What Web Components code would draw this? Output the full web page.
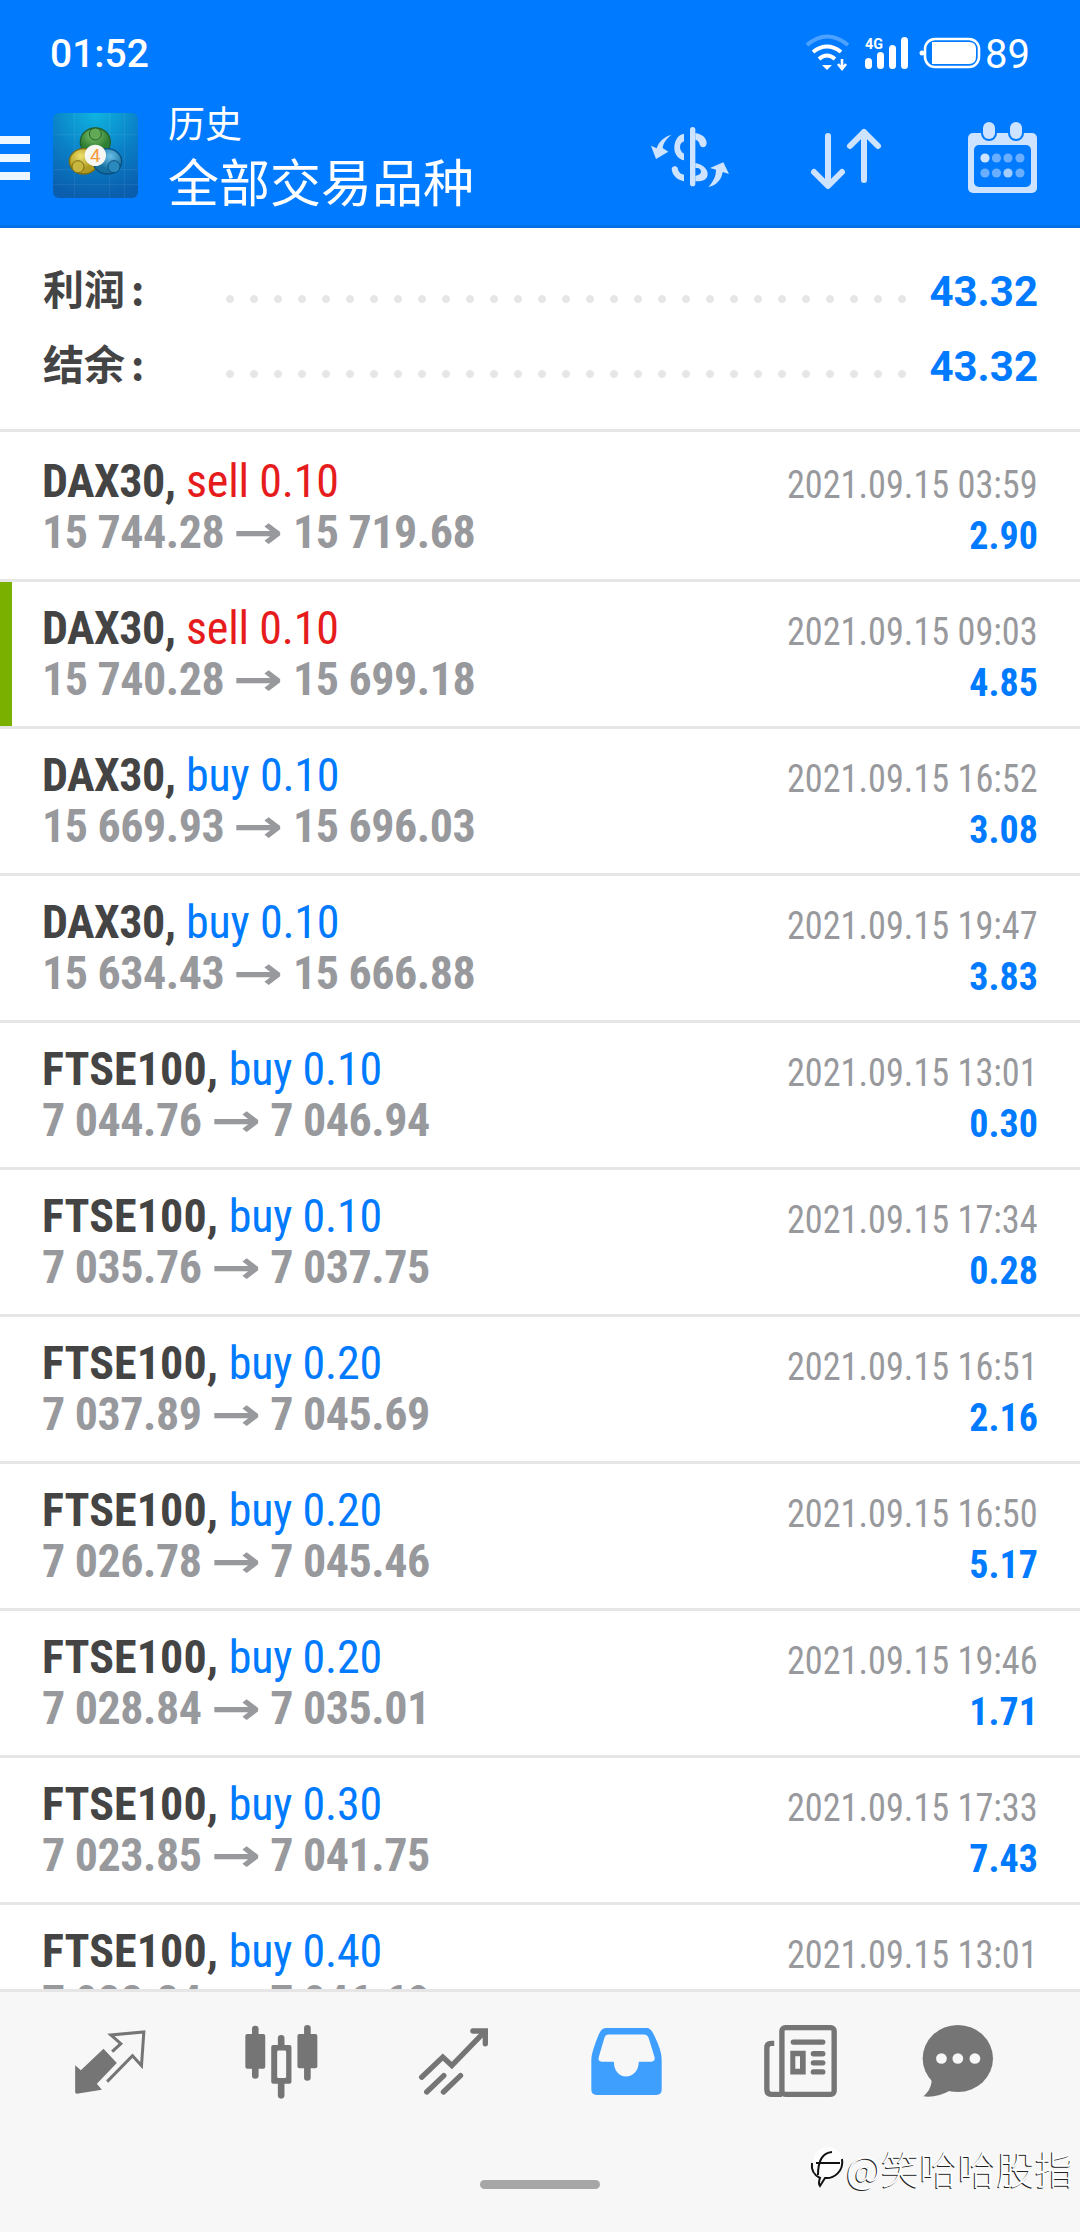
<!DOCTYPE html>
<html>
<head>
<meta charset="utf-8">
<style>
  html, body { margin: 0; padding: 0; }
  body { width: 1080px; height: 2232px; overflow: hidden; font-family: Roboto, "Noto Sans CJK SC", sans-serif; }
</style>
</head>
<body>
<mt-screen>
  <status-bar slot="top"></status-bar>
  <app-toolbar slot="top"></app-toolbar>
  <summary-panel slot="top"></summary-panel>
  <deal-row symbol="DAX30" side="sell" lots="0.10" open="15 744.28" close="15 719.68" time="2021.09.15 03:59" profit="2.90"></deal-row>
  <deal-row symbol="DAX30" side="sell" lots="0.10" open="15 740.28" close="15 699.18" time="2021.09.15 09:03" profit="4.85" marked></deal-row>
  <deal-row symbol="DAX30" side="buy" lots="0.10" open="15 669.93" close="15 696.03" time="2021.09.15 16:52" profit="3.08"></deal-row>
  <deal-row symbol="DAX30" side="buy" lots="0.10" open="15 634.43" close="15 666.88" time="2021.09.15 19:47" profit="3.83"></deal-row>
  <deal-row symbol="FTSE100" side="buy" lots="0.10" open="7 044.76" close="7 046.94" time="2021.09.15 13:01" profit="0.30"></deal-row>
  <deal-row symbol="FTSE100" side="buy" lots="0.10" open="7 035.76" close="7 037.75" time="2021.09.15 17:34" profit="0.28"></deal-row>
  <deal-row symbol="FTSE100" side="buy" lots="0.20" open="7 037.89" close="7 045.69" time="2021.09.15 16:51" profit="2.16"></deal-row>
  <deal-row symbol="FTSE100" side="buy" lots="0.20" open="7 026.78" close="7 045.46" time="2021.09.15 16:50" profit="5.17"></deal-row>
  <deal-row symbol="FTSE100" side="buy" lots="0.20" open="7 028.84" close="7 035.01" time="2021.09.15 19:46" profit="1.71"></deal-row>
  <deal-row symbol="FTSE100" side="buy" lots="0.30" open="7 023.85" close="7 041.75" time="2021.09.15 17:33" profit="7.43"></deal-row>
  <deal-row symbol="FTSE100" side="buy" lots="0.40" open="7 028.84" close="7 046.69" time="2021.09.15 13:01" profit="4.13"></deal-row>
  <bottom-nav slot="bottom"></bottom-nav>
</mt-screen>

<script>
class MtScreen extends HTMLElement {
  constructor() {
    super();
    this.attachShadow({ mode: 'open' });
    this.shadowRoot.innerHTML = `
      <style>
        :host { display: flex; flex-direction: column; width: 1080px; height: 2232px; background: #fff; }
        .list { flex: 1; min-height: 0; overflow: hidden; padding-top: 3px; }
      </style>
      <slot name="top"></slot>
      <div class="list"><slot></slot></div>
      <slot name="bottom"></slot>
    `;
  }
}

class StatusBar extends HTMLElement {
  constructor() {
    super();
    this.attachShadow({ mode: 'open' });
    this.shadowRoot.innerHTML = `
      <style>
        :host { display: flex; align-items: center; justify-content: space-between; height: 108px; padding: 0 51px 0 50px; background: #007aff; color: #fff; box-sizing: border-box; }
        .time { font: 500 39px Roboto, sans-serif; }
        .right { display: flex; align-items: center; }
        .level { font: 400 40px Roboto, sans-serif; width: 44px; text-align: right; }
        svg { display: block; }
      </style>
      <span class="time">01:52</span>
      <div class="right">
        <svg width="185" height="50" viewBox="800 30 185 50">
          <g fill="none" stroke="#fff" stroke-width="4">
            <path d="M807 46 Q827 29 848 46" opacity=".3"/>
            <path d="M813 53 Q827 42 841 53"/>
            <path d="M819 60 Q827 53 835 60"/>
          </g>
          <polygon points="822,66 832,66 827,71" fill="#fff"/>
          <path d="M842 60 V68 M838 65 L842 70 L846 65" fill="none" stroke="#fff" stroke-width="2.6"/>
          <text x="865" y="50" font-family="Roboto" font-weight="700" font-size="15" fill="#fff" textLength="18" lengthAdjust="spacingAndGlyphs">4G</text>
          <g fill="#fff">
            <rect x="865" y="59" width="7" height="11" rx="3.5"/>
            <rect x="877" y="53" width="7" height="17" rx="3.5"/>
            <rect x="889" y="46" width="7" height="24" rx="3.5"/>
            <rect x="901" y="38" width="7" height="32" rx="3.5"/>
            <circle cx="922" cy="54" r="2.5"/>
            <path d="M932 43 H969 Q976 43 976 50 V58 Q976 65 969 65 H932 Z"/>
          </g>
          <rect x="925" y="40" width="54" height="28" rx="10" fill="none" stroke="#fff" stroke-width="2.6"/>
        </svg>
        <span class="level">89</span>
      </div>
    `;
  }
}

class AppToolbar extends HTMLElement {
  constructor() {
    super();
    this.attachShadow({ mode: 'open' });
    const c = '#cde3ff';
    this.shadowRoot.innerHTML = `
      <style>
        :host { display: flex; align-items: flex-start; height: 120px; box-sizing: border-box; padding: 5px 43px 0 0; background: #007aff; border-bottom: 3px solid #0070e6; color: #fff; font-family: "Noto Sans CJK SC", sans-serif; }
        .burger { width: 30px; height: 44px; margin: 23px 23px 0 0; display: flex; flex-direction: column; justify-content: space-between; }
        .burger i { display: block; height: 8px; background: #eef6ff; }
        .logo { flex: none; margin-right: 30px; }
        .titles { flex: 1; margin-top: -16px; font-weight: 400; }
        .sub { font-size: 37px; line-height: 50px; }
        .main { font-size: 51px; line-height: 66px; }
        svg { display: block; flex: none; }
        .gap1 { margin-left: 56px; }
        .gap2 { margin-left: 82px; }
      </style>
      <div class="burger"><i></i><i></i><i></i></div>
      <svg class="logo" width="85" height="85" viewBox="25 25 255 255">
        <defs>
          <radialGradient id="lg" cx=".5" cy="0" r="1"><stop offset="0" stop-color="#0fb4e0"/><stop offset=".55" stop-color="#0a7ec6"/><stop offset="1" stop-color="#0a5ead"/></radialGradient>
          <radialGradient id="gr" cx=".45" cy=".25"><stop offset="0" stop-color="#7fc46c"/><stop offset="1" stop-color="#2f7f33"/></radialGradient>
          <radialGradient id="ye" cx=".4" cy=".3"><stop offset="0" stop-color="#ece06c"/><stop offset="1" stop-color="#b09a22"/></radialGradient>
          <radialGradient id="bl" cx=".6" cy=".3"><stop offset="0" stop-color="#6cc0e8"/><stop offset="1" stop-color="#16709f"/></radialGradient>
        </defs>
        <rect x="25" y="25" width="255" height="255" rx="18" fill="url(#lg)"/>
        <path d="M25 90 H280 M25 195 H280 M25 240 H280 M90 25 V280 M195 25 V280 M240 25 V280" stroke="#fff" stroke-opacity=".12" stroke-width="2"/>
        <ellipse cx="152" cy="112" rx="45" ry="42" fill="url(#gr)" stroke="#24602c" stroke-width="4"/>
        <ellipse cx="117" cy="170" rx="43" ry="38" fill="url(#ye)" stroke="#7d6e12" stroke-width="4"/>
        <ellipse cx="188" cy="170" rx="43" ry="38" fill="url(#bl)" stroke="#0a4f80" stroke-width="4"/>
        <circle cx="152" cy="88" r="18" fill="#62a955" stroke="#24602c" stroke-width="3"/>
        <circle cx="100" cy="186" r="18" fill="#c9b63e" stroke="#7d6e12" stroke-width="3"/>
        <circle cx="208" cy="186" r="18" fill="#2a8abd" stroke="#0a4f80" stroke-width="3"/>
        <circle cx="152" cy="152" r="32" fill="#f6f6f2"/>
        <text x="152" y="172" text-anchor="middle" font-family="Roboto" font-size="56" fill="#f39a3e">4</text>
      </svg>
      <div class="titles"><div class="sub">历史</div><div class="main">全部交易品种</div></div>
      <svg width="110" height="80" viewBox="0 0 330 240">
        <g fill="${c}">
          <rect x="150" y="42" width="16" height="178" rx="8"/>
          <path d="M166 60 C185 62 200 75 200 90 C200 102 188 106 182 100 C178 94 178 82 166 80 Z"/>
          <path d="M132 62 C112 66 103 85 103 105 C103 125 118 140 132 142 V122 C124 118 120 110 120 102 C120 94 124 88 132 85 Z"/>
          <path d="M166 150 C190 155 205 170 203 185 C200 205 180 205 166 205 V188 C178 188 186 180 182 172 C180 165 172 165 166 165 Z"/>
          <path d="M132 205 C110 200 95 185 95 165 C100 158 110 158 113 165 C115 178 122 183 132 185 Z"/>
          <path d="M95 65 C78 78 70 90 68 105 L85 116 L48 138 L33 98 L50 106 C56 85 75 70 95 65 Z"/>
          <path d="M205 222 C220 205 228 190 228 170 L210 165 L250 148 L267 183 L248 177 C245 200 228 218 205 222 Z"/>
        </g>
      </svg>
      <svg class="gap1" width="80" height="80" viewBox="806 110 80 80">
        <path d="M828 133 V182 M814 169 L828 183 L842 169 M864 129 V177 M850 143 L864 129 L878 143" fill="none" stroke="${c}" stroke-width="6" stroke-linecap="round" stroke-linejoin="round"/>
      </svg>
      <svg class="gap2" width="69" height="80" viewBox="968 110 69 80">
        <rect x="968" y="130" width="69" height="60" rx="5" fill="${c}"/>
        <rect x="974" y="142" width="57" height="42" rx="5" fill="#007aff"/>
        <rect x="981" y="117" width="16" height="21" rx="8" fill="#007aff"/>
        <rect x="1008" y="117" width="16" height="21" rx="8" fill="#007aff"/>
        <rect x="983" y="119" width="12" height="17" rx="6" fill="${c}"/>
        <rect x="1010" y="119" width="12" height="17" rx="6" fill="${c}"/>
        <g fill="#6aaeff">
          <circle cx="985" cy="155" r="4.6" fill="${c}"/><circle cx="996.5" cy="155" r="4.6"/><circle cx="1008" cy="155" r="4.6"/><circle cx="1020" cy="155" r="4.6"/>
          <circle cx="985" cy="170" r="4.6"/><circle cx="996.5" cy="170" r="4.6"/><circle cx="1008" cy="170" r="4.6" fill="#a5ceff"/><circle cx="1020" cy="170" r="4.6"/>
        </g>
      </svg>
    `;
  }
}

class SummaryPanel extends HTMLElement {
  constructor() {
    super();
    this.attachShadow({ mode: 'open' });
    const row = (label, value) => `
      <div class="row">
        <span class="label">${label}<span class="colon">:</span></span>
        <span class="dots"></span>
        <span class="value">${value}</span>
      </div>`;
    this.shadowRoot.innerHTML = `
      <style>
        :host { display: block; box-sizing: border-box; height: 204px; padding: 26px 42px 0 43px; border-bottom: 3px solid #e6e6e6; background: #fff; }
        .row { display: flex; align-items: center; height: 75px; }
        .label { width: 183px; flex: none; margin-bottom: 10px; font: 700 41px "Noto Sans CJK SC", sans-serif; color: #444; }
        .colon { margin-left: 6px; }
        .dots { width: 680px; height: 8px; margin-top: 14px; background: radial-gradient(circle at 4px 4px, #e6e6e6 3.6px, transparent 4.2px) 0 0 / 24px 8px repeat-x; }
        .value { margin-left: auto; font: 700 42px Roboto, sans-serif; color: #007aff; }
      </style>
      ${row('利润', '43.32')}
      ${row('结余', '43.32')}
    `;
  }
}

class DealRow extends HTMLElement {
  constructor() {
    super();
    this.attachShadow({ mode: 'open' });
  }

  connectedCallback() {
    const get = name => this.getAttribute(name);
    const color = get('side') === 'sell' ? '#e61c1c' : '#007aff';
    // FTSE100 sits wider than DAX30 in the reference
    const tracking = get('symbol') === 'DAX30' ? '-0.5px' : '0.1px';
    this.shadowRoot.innerHTML = `
      <style>
        :host { display: flex; justify-content: space-between; box-sizing: border-box; height: 147px; padding: 21px 42px 0 42px; border-bottom: 3px solid #e6e6e6; background: #fff; font-family: Roboto, sans-serif; font-stretch: 75%; }
        :host([marked]) { box-shadow: inset 12px 0 0 #7ab000; }
        .line { line-height: 51px; font-size: 46px; white-space: nowrap; }
        .symbol { font-weight: 700; color: #444; letter-spacing: ${tracking}; }
        .side { font-weight: 400; letter-spacing: -0.2px; }
        .prices { font-weight: 700; color: #98999d; letter-spacing: -0.5px; }
        .arrow { display: inline-block; margin: 0 5px; font: 700 46px/51px "DejaVu Sans", sans-serif; letter-spacing: 0; transform: scaleX(1.3); }
        .right { text-align: right; }
        .time { font-size: 39px; line-height: 51px; color: #98999d; margin-top: 4px; transform: scaleX(.93); transform-origin: right center; white-space: nowrap; }
        .profit { font-size: 38px; line-height: 51px; font-weight: 700; color: #007aff; }
      </style>
      <div>
        <div class="line"><span class="symbol">${get('symbol')},</span> <span class="side" style="color:${color}">${get('side')} ${get('lots')}</span></div>
        <div class="line prices">${get('open')} <span class="arrow">→</span> ${get('close')}</div>
      </div>
      <div class="right">
        <div class="time">${get('time')}</div>
        <div class="profit">${get('profit')}</div>
      </div>
    `;
  }
}

class BottomNav extends HTMLElement {
  constructor() {
    super();
    this.attachShadow({ mode: 'open' });
    const g = '#757575', bg = '#f7f7f7';
    this.shadowRoot.innerHTML = `
      <style>
        :host { display: block; position: relative; box-sizing: border-box; height: 243px; border-top: 3px solid #e6e6e6; background: ${bg}; }
        .icons { display: flex; align-items: flex-start; padding: 33px 0 0 74px; height: 188px; box-sizing: border-box; }
        svg { display: block; flex: none; }
        .low { margin-top: 3px; }
        .handle { width: 120px; height: 9px; margin: 0 auto; border-radius: 5px; background: #a6a6a6; }
        .mark { position: absolute; left: 808px; top: 147px; display: flex; align-items: center; font: 300 38.5px "Noto Sans CJK SC", sans-serif; color: #fff; text-shadow: -1px 1px 0 #222; white-space: nowrap; }
      </style>
      <div class="icons">
        <svg class="low" width="72" height="66" viewBox="215 385 209 198">
          <path d="M215 497 L232 512 L300 447 L340 490 L280 552 L295 570 L220 582 Q215 582 215 577 Z" fill="${g}"/>
          <path d="M326 456 L352 432 L322 406 L421 397 L414 498 L387 468 L311 546" fill="none" stroke="${g}" stroke-width="9"/>
        </svg>
        <svg style="margin-left:96px" width="79" height="74" viewBox="705 375 226 223">
          <g fill="${g}">
            <rect x="729" y="377" width="20" height="160" rx="10"/><rect x="709" y="402" width="60" height="105" rx="6"/>
            <rect x="807" y="405" width="20" height="192" rx="10"/><rect x="787" y="435" width="61" height="117" rx="6"/>
            <rect x="886" y="375" width="20" height="168" rx="10"/><rect x="866" y="402" width="60" height="103" rx="6"/>
          </g>
          <rect x="805" y="452" width="27" height="83" rx="4" fill="${bg}"/>
        </svg>
        <svg class="low" style="margin-left:97px" width="71" height="67" viewBox="1214 383 206 200">
          <g fill="none" stroke="${g}" stroke-width="16" stroke-linecap="round" stroke-linejoin="miter">
            <path d="M1222 530 L1285 470 L1312 495 L1408 396"/>
            <path d="M1375 392 H1412 V430"/>
            <path d="M1237 574 L1288 525"/>
            <path d="M1287 574 L1338 525"/>
          </g>
        </svg>
        <svg class="low" style="margin-left:101px" width="73" height="67" viewBox="147 383 209 199">
          <path d="M190 383 H310 C325 383 330 395 345 430 C352 450 356 460 356 480 V565 Q356 582 340 582 H163 Q147 582 147 565 V480 C147 460 155 440 160 425 C170 400 175 383 190 383 Z" fill="#3f9fff"/>
          <path d="M198 402 H302 Q315 402 318 415 L335 470 Q337 483 325 483 H288 C288 510 270 527 250 527 C230 527 214 510 214 483 H178 Q166 483 169 470 L185 415 Q188 402 198 402 Z" fill="${bg}"/>
        </svg>
        <svg style="margin-left:99px" width="77" height="72" viewBox="647 375 217 215">
          <g fill="none" stroke="${g}" stroke-width="16">
            <rect x="700" y="383" width="156" height="199" rx="10"/>
            <path d="M677 430 H668 Q655 430 655 443 V567 Q655 582 668 582 H700"/>
          </g>
          <g fill="${g}">
            <rect x="726" y="418" width="104" height="16" rx="8"/>
            <path fill-rule="evenodd" d="M725 452 H771 V523 H725 Z M740 468 V506 H754 V468 Z"/>
            <rect x="786" y="453" width="44" height="16" rx="8"/>
            <rect x="786" y="480" width="44" height="16" rx="8"/>
            <rect x="786" y="507" width="44" height="16" rx="8"/>
          </g>
        </svg>
        <svg style="margin-left:82px" width="74" height="72" viewBox="1109 375 209 215">
          <ellipse cx="1213" cy="475" rx="105" ry="100" fill="${g}"/>
          <path d="M1135 535 C1135 565 1120 580 1110 588 C1135 592 1165 585 1195 568 Z" fill="${g}"/>
          <circle cx="1164" cy="475" r="16" fill="${bg}"/><circle cx="1213" cy="475" r="16" fill="${bg}"/><circle cx="1264" cy="475" r="16" fill="${bg}"/>
        </svg>
      </div>
      <div class="handle"></div>
      <div class="mark">
        <svg width="38" height="44" viewBox="0 0 38 44">
          <circle cx="20" cy="17" r="15" fill="#fff" fill-opacity=".8"/>
          <path d="M34 14 C36 26 26 34 17 33 L12 41 Q10 38 12 33 C6 30 3 25 4 18 M10 30 C10 20 12 8 24 7 M8 18 H32" fill="none" stroke="#111" stroke-width="2"/>
        </svg>
        <span>@笑哈哈股指</span>
      </div>
    `;
  }
}

customElements.define('mt-screen', MtScreen);
customElements.define('status-bar', StatusBar);
customElements.define('app-toolbar', AppToolbar);
customElements.define('summary-panel', SummaryPanel);
customElements.define('deal-row', DealRow);
customElements.define('bottom-nav', BottomNav);
</script>
</body>
</html>
